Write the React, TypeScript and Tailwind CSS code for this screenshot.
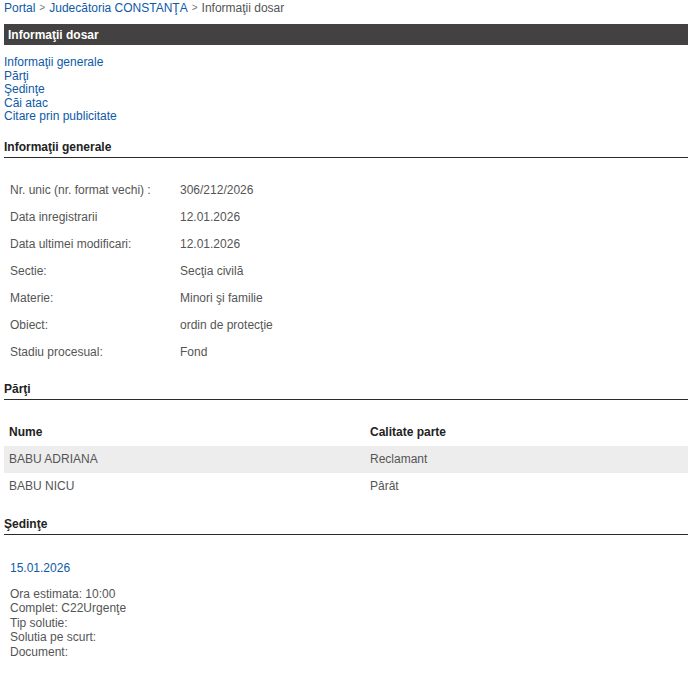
const info = [
  ['Nr. unic (nr. format vechi) :', '306/212/2026'],
  ['Data inregistrarii', '12.01.2026'],
  ['Data ultimei modificari:', '12.01.2026'],
  ['Sectie:', 'Secţia civilă'],
  ['Materie:', 'Minori şi familie'],
  ['Obiect:', 'ordin de protecţie'],
  ['Stadiu procesual:', 'Fond'],
]

const parti = [
  ['BABU ADRIANA', 'Reclamant'],
  ['BABU NICU', 'Pârât'],
]

const sedinta = ['Ora estimata: 10:00', 'Complet: C22Urgenţe', 'Tip solutie:', 'Solutia pe scurt:', 'Document:']

function SectionTitle({ children, className = '' }: { children: React.ReactNode; className?: string }) {
  return (
    <h2 className={`border-b border-[#2b2b2b] pb-[3px] text-[12px] font-bold leading-[14px] text-[#222] ${className}`}>
      {children}
    </h2>
  )
}

export default function App() {
  return (
    <div className="min-h-[687px] bg-white font-['Liberation_Sans',Arial,sans-serif] text-[12px]">
      <div className="ml-1 w-[684px]">
        <nav className="flex items-center gap-1 leading-[16px]">
          <span className="text-[#0d5aa7]">Portal</span>
          <span className="text-[10px] text-[#777]">&gt;</span>
          <span className="text-[#0d5aa7]">Judecătoria CONSTANŢA</span>
          <span className="text-[10px] text-[#777]">&gt;</span>
          <span className="text-[#555]">Informaţii dosar</span>
        </nav>

        <div className="mt-2 flex h-[21px] items-center bg-[#434142] pl-1 text-[12px] font-bold text-white">
          Informaţii dosar
        </div>

        <ul className="mt-[11px] leading-[13.5px] text-[#0d5aa7]">
          <li>Informaţii generale</li>
          <li>Părţi</li>
          <li>Şedinţe</li>
          <li>Căi atac</li>
          <li>Citare prin publicitate</li>
        </ul>

        <SectionTitle className="mt-[16px]">Informaţii generale</SectionTitle>
        <div className="mt-[19px] text-[#555]">
          {info.map(([label, value]) => (
            <div key={label} className="grid h-[27px] grid-cols-[170px_1fr] items-center">
              <span className="pl-1.5">{label}</span>
              <span className="pl-1.5">{value}</span>
            </div>
          ))}
        </div>

        <SectionTitle className="mt-[16px]">Părţi</SectionTitle>
        <div className="mt-[19px]">
          <div className="grid h-[27px] grid-cols-[361px_1fr] items-center font-bold text-[#222]">
            <span className="pl-[5px]">Nume</span>
            <span className="pl-[5px]">Calitate parte</span>
          </div>
          {parti.map(([name, role], i) => (
            <div
              key={name}
              className={`grid h-[27px] grid-cols-[361px_1fr] items-center text-[#555] ${i === 0 ? 'bg-[#ededed]' : ''}`}
            >
              <span className="pl-[5px]">{name}</span>
              <span className="pl-[5px]">{role}</span>
            </div>
          ))}
        </div>

        <SectionTitle className="mt-[17px]">Şedinţe</SectionTitle>
        <div className="mt-[26px] pl-1.5">
          <p className="leading-[14px] text-[#0d5aa7]">15.01.2026</p>
          <div className="mt-[12px] leading-[14.5px] text-[#555]">
            {sedinta.map((line) => (
              <p key={line}>{line}</p>
            ))}
          </div>
        </div>
      </div>
    </div>
  )
}
